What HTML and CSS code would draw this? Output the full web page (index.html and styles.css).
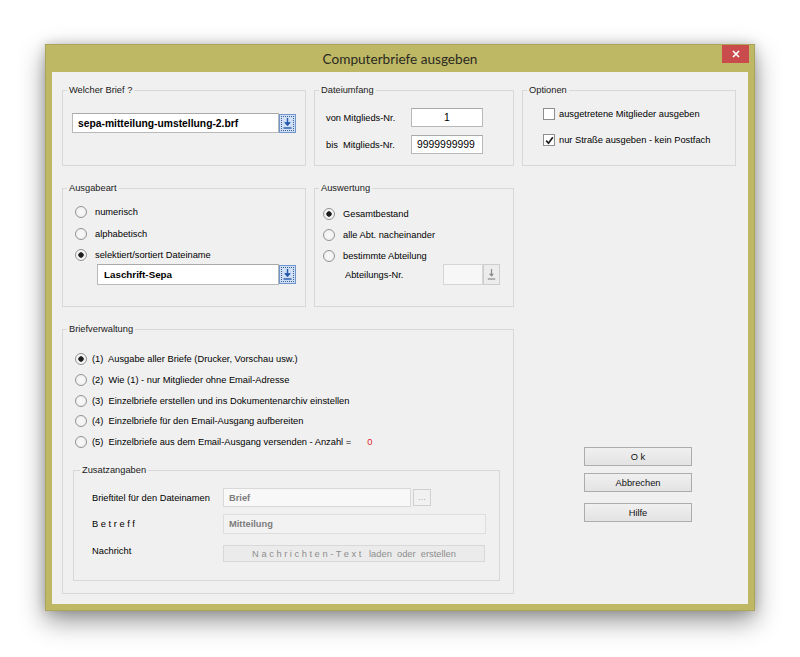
FILE: index.html
```html
<!DOCTYPE html>
<html lang="de">
<head>
<meta charset="utf-8">
<title>Computerbriefe ausgeben</title>
<link rel="stylesheet" href="styles.css">
</head>
<body>
<div class="desk">
  <div class="window">
    <div class="titlebar">
      <span></span>
      <span class="title">Computerbriefe ausgeben</span>
      <span class="close"><svg width="8" height="8" viewBox="0 0 8 8"><path d="M1 1L7 7M7 1L1 7" stroke="#fff" stroke-width="1.7"/></svg></span>
    </div>
    <div class="client">
      <fieldset class="grp">
        <legend>Welcher Brief ?</legend>
        <div class="brief-row">
          <div class="tb tb-brief">sepa-mitteilung-umstellung-2.brf</div>
          <div class="ddbtn active"><svg width="9" height="11" viewBox="0 0 9 11"><path d="M4.5 0V7" stroke="#2458ab" stroke-width="1.4"/><path d="M1.8 4.6L4.5 7.8L7.2 4.6Z" fill="#2458ab" stroke="#2458ab" stroke-width="0.8"/><path d="M0.5 10H8.5" stroke="#2458ab" stroke-width="1.4"/></svg></div>
        </div>
      </fieldset>

      <fieldset class="grp">
        <legend>Dateiumfang</legend>
        <div class="range">
          <span class="lbl">von Mitglieds-Nr.</span>
          <div class="tb tb-num center">1</div>
          <span class="lbl">bis&nbsp; Mitglieds-Nr.</span>
          <div class="tb tb-num">9999999999</div>
        </div>
      </fieldset>

      <fieldset class="grp">
        <legend>Optionen</legend>
        <div class="opts">
          <div class="opt"><span class="check"></span><span>ausgetretene Mitglieder ausgeben</span></div>
          <div class="opt"><span class="check"><svg width="9" height="9" viewBox="0 0 9 9"><path d="M1.2 4.6L3.5 7.2L7.8 1.2" fill="none" stroke="#1e1e1e" stroke-width="1.7"/></svg></span><span>nur Straße ausgeben - kein Postfach</span></div>
        </div>
      </fieldset>

      <fieldset class="grp">
        <legend>Ausgabeart</legend>
        <div class="list list-aus">
          <div class="opt"><span class="radio"></span><span class="rt">numerisch</span></div>
          <div class="opt"><span class="radio"></span><span class="rt">alphabetisch</span></div>
          <div class="opt"><span class="radio on"></span><span class="rt">selektiert/sortiert Dateiname</span></div>
          <div class="file-row">
            <div class="tb tb-file">Laschrift-Sepa</div>
            <div class="ddbtn active"><svg width="9" height="11" viewBox="0 0 9 11"><path d="M4.5 0V7" stroke="#2458ab" stroke-width="1.4"/><path d="M1.8 4.6L4.5 7.8L7.2 4.6Z" fill="#2458ab" stroke="#2458ab" stroke-width="0.8"/><path d="M0.5 10H8.5" stroke="#2458ab" stroke-width="1.4"/></svg></div>
          </div>
        </div>
      </fieldset>

      <fieldset class="grp">
        <legend>Auswertung</legend>
        <div class="list list-ausw">
          <div class="opt"><span class="radio on"></span><span class="rt">Gesamtbestand</span></div>
          <div class="opt"><span class="radio"></span><span class="rt">alle Abt. nacheinander</span></div>
          <div class="opt"><span class="radio"></span><span class="rt">bestimmte Abteilung</span></div>
          <div class="abt-row">
            <span class="abt-lbl">Abteilungs-Nr.</span>
            <div class="tb tb-abt"></div>
            <div class="ddbtn off"><svg width="9" height="11" viewBox="0 0 9 11"><path d="M4.5 0V7" stroke="#8a8a8a" stroke-width="1.2"/><path d="M2 4.8L4.5 7.8L7 4.8Z" fill="#8a8a8a"/><path d="M0.8 10H8.2" stroke="#8a8a8a" stroke-width="1.2"/></svg></div>
          </div>
        </div>
      </fieldset>

      <div class="empty"></div>

      <fieldset class="grp bv">
        <legend>Briefverwaltung</legend>
        <div class="list list-bv">
          <div class="opt"><span class="radio on"></span><span class="rt2">(1)&nbsp; Ausgabe aller Briefe (Drucker, Vorschau usw.)</span></div>
          <div class="opt"><span class="radio"></span><span class="rt2">(2)&nbsp; Wie (1) - nur Mitglieder ohne Email-Adresse</span></div>
          <div class="opt"><span class="radio"></span><span class="rt2">(3)&nbsp; Einzelbriefe erstellen und ins Dokumentenarchiv einstellen</span></div>
          <div class="opt"><span class="radio"></span><span class="rt2">(4)&nbsp; Einzelbriefe für den Email-Ausgang aufbereiten</span></div>
          <div class="opt"><span class="radio"></span><span class="rt2">(5)&nbsp; Einzelbriefe aus dem Email-Ausgang versenden - Anzahl =</span><span class="count">0</span></div>
        </div>
        <fieldset class="grp zusatz">
          <legend>Zusatzangaben</legend>
          <div class="zbody">
            <div class="zrow z1">
              <span class="zl">Brieftitel für den Dateinamen</span>
              <div class="tb tb-titel">Brief</div><div class="dots">...</div>
            </div>
            <div class="zrow z2">
              <span class="zl">B e t r e f f</span>
              <div class="tb tb-betreff">Mitteilung</div>
            </div>
            <div class="zrow z3">
              <span class="zl zl-msg">Nachricht</span>
              <div class="msgbox">N a c h r i c h t e n - T e x t &nbsp;&nbsp;laden&nbsp; oder&nbsp; erstellen</div>
            </div>
          </div>
        </fieldset>
      </fieldset>

      <div class="buttons">
        <div class="btn b-ok">O k</div>
        <div class="btn b-ab">Abbrechen</div>
        <div class="btn b-hi">Hilfe</div>
      </div>
    </div>
  </div>
</div>
</body>
</html>
```
FILE: styles.css
```css
html, body {
  margin: 0;
  padding: 0;
  background: #ffffff;
}

.desk {
  padding: 44px 0 0 45px;
  height: 613px;
}

.window {
  width: 710px;
  height: 567px;
  box-sizing: border-box;
  background: #beb865;
  border: 1px solid #aaa559;
  display: flex;
  flex-direction: column;
  box-shadow: 0 10px 24px rgba(0, 0, 0, 0.42), 0 0 10px rgba(0, 0, 0, 0.18);
  font-family: "Liberation Sans", Arial, sans-serif;
  font-size: 9.3px;
  color: #000;
}

.titlebar {
  height: 27px;
  display: grid;
  grid-template-columns: 1fr auto 1fr;
  align-items: center;
}

.title {
  font-family: Lato, "Open Sans", sans-serif;
  font-size: 13.6px;
  color: #2a2a22;
  padding-top: 1px;
}

.close {
  justify-self: end;
  align-self: start;
  width: 27px;
  height: 18px;
  margin-right: 5px;
  background: #c94b4b;
  display: flex;
  align-items: center;
  justify-content: center;
}

.client {
  flex: 1;
  margin: 0 6px 6px;
  background: #f0f0f0;
  display: grid;
  grid-template-columns: 244px 200px 214px;
  grid-template-rows: 82px 125px 271px;
  column-gap: 8px;
  row-gap: 16px;
  padding: 12px 0 0 10px;
}

.grp {
  margin: 0;
  padding: 0;
  min-width: 0;
  border: 1px solid #d8d8d8;
  box-sizing: border-box;
}

.grp > legend {
  padding: 0 2px;
  margin-left: 4px;
  line-height: 12px;
  font-size: 9.3px;
  color: #1a1a1a;
}

/* text boxes */
.tb {
  box-sizing: border-box;
  background: #fff;
  border: 1px solid #b9b9b9;
  border-top-color: #a9a9a9;
  display: flex;
  align-items: center;
  white-space: nowrap;
}

.ddbtn {
  box-sizing: border-box;
  width: 17px;
  height: 19px;
  display: flex;
  align-items: center;
  justify-content: center;
}

.ddbtn.active {
  background: #cfe0f6;
  border: 1px solid #6f95cc;
  outline: 1px dotted #3d5f94;
  outline-offset: -3px;
}

.ddbtn.off {
  background: #ececec;
  border: 1px solid #cdcdcd;
}

/* Welcher Brief */
.brief-row {
  display: flex;
  align-items: center;
  padding: 17px 0 0 9px;
}

.tb-brief {
  width: 207px;
  height: 20px;
  font-weight: bold;
  font-size: 10.3px;
  padding-left: 5px;
}

/* Dateiumfang */
.range {
  display: grid;
  grid-template-columns: 85px 72px;
  grid-auto-rows: 19px;
  row-gap: 8px;
  align-items: center;
  padding: 12px 0 0 11px;
}

.tb-num {
  height: 19px;
  font-size: 10.4px;
  padding-left: 5px;
}

.tb-num.center {
  justify-content: center;
  padding-left: 0;
}

/* Optionen */
.opts {
  display: flex;
  flex-direction: column;
  gap: 12px;
  padding: 11px 0 0 20px;
}

.opt {
  display: flex;
  align-items: center;
  height: 14px;
  white-space: nowrap;
}

.check {
  box-sizing: border-box;
  width: 12px;
  height: 12px;
  border: 1px solid #8e8e8e;
  background: #fff;
  margin-right: 4px;
  display: flex;
  align-items: center;
  justify-content: center;
}

.radio {
  box-sizing: border-box;
  width: 12px;
  height: 12px;
  border: 1px solid #939393;
  border-radius: 50%;
  background: radial-gradient(circle, #f9f9f9 0, #ececec 100%);
  flex: none;
}

.radio.on {
  background: radial-gradient(circle, #1e1e1e 0, #1e1e1e 2.4px, #f4f4f4 3px);
}

.rt {
  margin-left: 8px;
}

.rt2 {
  margin-left: 5px;
}

/* Ausgabeart */
.list {
  display: flex;
  flex-direction: column;
}

.list-aus {
  padding: 11px 0 0 12px;
  gap: 7.5px;
}

.file-row {
  display: flex;
  align-items: center;
  margin: -6px 0 0 22px;
}

.tb-file {
  width: 182px;
  height: 21px;
  font-weight: bold;
  font-size: 9.8px;
  padding-left: 6px;
}

/* Auswertung */
.list-ausw {
  padding: 13px 0 0 8px;
  gap: 6.8px;
}

.abt-row {
  display: flex;
  align-items: center;
  margin: -5px 0 0 22px;
}

.abt-lbl {
  width: 98px;
}

.tb-abt {
  width: 40px;
  height: 21px;
  background: #f7f7f7;
  border-color: #d6d6d6;
}

.abt-row .ddbtn {
  height: 21px;
}

/* Briefverwaltung */
.bv {
  grid-column: 1 / 3;
}

.list-bv {
  padding: 17px 0 0 12px;
  gap: 6.75px;
}

.count {
  color: #e0262b;
  margin-left: 16px;
}

.zusatz {
  width: 427px;
  height: 117px;
  margin: 15px 0 0 10px;
}

.zusatz > legend {
  margin-left: 6px;
}

.zbody {
  display: flex;
  flex-direction: column;
  padding: 12px 0 0 18px;
}

.zrow {
  display: flex;
  align-items: center;
}

.z2 {
  margin-top: 7px;
}

.z3 {
  margin-top: 11px;
}

.zl {
  width: 131px;
  flex: none;
}

.zl-msg {
  padding-bottom: 5px;
}

.tb-titel {
  width: 188px;
  height: 19px;
  background: #f8f8f8;
  border-color: #d9d9d9;
  color: #7d7d7d;
  font-weight: bold;
  padding-left: 5px;
}

.dots {
  box-sizing: border-box;
  width: 18px;
  height: 17px;
  margin-left: 2px;
  border: 1px solid #d0d0d0;
  background: #f1f1f1;
  color: #8a8a8a;
  font-size: 8px;
  display: flex;
  align-items: flex-end;
  justify-content: center;
  padding-bottom: 3px;
  letter-spacing: 0.5px;
}

.tb-betreff {
  width: 263px;
  height: 20px;
  background: #f2f2f2;
  border-color: #dedede;
  color: #7d7d7d;
  font-weight: bold;
  padding-left: 5px;
}

.msgbox {
  box-sizing: border-box;
  width: 262px;
  height: 17px;
  background: #ebebeb;
  border: 1px solid #d8d8d8;
  color: #8d8d8d;
  display: flex;
  align-items: center;
  justify-content: center;
  white-space: nowrap;
}

/* buttons */
.buttons {
  display: flex;
  flex-direction: column;
  padding: 124px 0 0 62px;
}

.btn {
  box-sizing: border-box;
  width: 108px;
  height: 19px;
  border: 1px solid #acacac;
  background: linear-gradient(#f0f0f0, #e3e3e3);
  display: flex;
  align-items: center;
  justify-content: center;
  color: #111;
}

.b-ab {
  margin-top: 7px;
}

.b-hi {
  margin-top: 11px;
}
```
